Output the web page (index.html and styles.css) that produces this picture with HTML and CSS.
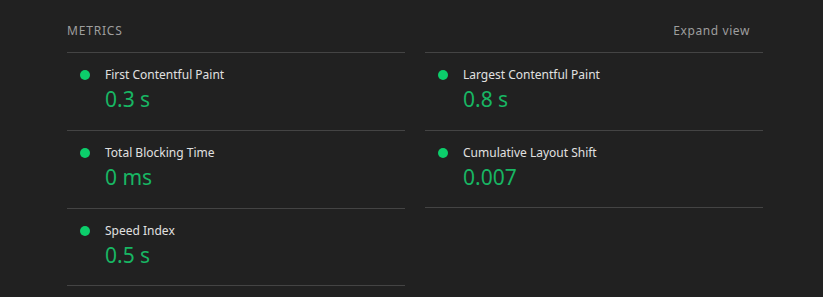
FILE: index.html
```html
<!DOCTYPE html>
<html lang="en">
    <head>
        <meta charset="UTF-8">
        <meta name="viewport" content="width=device-width, initial-scale=1.0">
        <title>Metrics</title>
        <link rel="stylesheet" href="styles.css">
    </head>
<body>
    <div class="metrics">
        <div class="metrics-header">
            <span class="metrics-title">METRICS</span>
            <span class="expand-link">Expand view</span>
        </div>
        <div class="metrics-grid">
            <div class="metric">
                <span class="dot"></span>
                <span class="metric-label">First Contentful Paint</span>
                <span class="metric-value">0.3 s</span>
            </div>
            <div class="metric">
                <span class="dot"></span>
                <span class="metric-label">Largest Contentful Paint</span>
                <span class="metric-value">0.8 s</span>
            </div>
            <div class="metric">
                <span class="dot"></span>
                <span class="metric-label">Total Blocking Time</span>
                <span class="metric-value">0 ms</span>
            </div>
            <div class="metric">
                <span class="dot"></span>
                <span class="metric-label">Cumulative Layout Shift</span>
                <span class="metric-value">0.007</span>
            </div>
            <div class="metric">
                <span class="dot"></span>
                <span class="metric-label">Speed Index</span>
                <span class="metric-value">0.5 s</span>
            </div>
        </div>
    </div>
</body>
</html>
```

FILE: styles.css
```css
body {
    margin: 0;
    background-color: #212121;
    font-family: 'Noto Sans', 'Open Sans', sans-serif;
}
.metrics {
    width: 696px;
    margin-left: 67px;
}
.metrics-header {
    display: flex;
    justify-content: space-between;
    align-items: center;
    height: 52px;
    padding-right: 13px;
    padding-top: 8px;
    box-sizing: border-box;
}
.metrics-title {
    color: #9e9e9e;
    font-size: 12px;
    letter-spacing: 0.8px;
}
.expand-link {
    color: #9e9e9e;
    font-size: 12px;
    letter-spacing: 0.6px;
}
.metrics-grid {
    display: grid;
    grid-template-columns: 1fr 1fr;
    column-gap: 20px;
}
.metric {
    display: grid;
    grid-template-columns: 38px 1fr;
    align-items: center;
    align-content: start;
    height: 78px;
    padding-top: 14px;
    box-sizing: border-box;
    border-top: 1px solid #444;
}
.metric:nth-last-child(-n+2) {
    border-bottom: 1px solid #444;
}
.dot {
    width: 10px;
    height: 10px;
    border-radius: 50%;
    background: #0cce6b;
    margin-left: 13px;
}
.metric-label {
    color: #e0e0e0;
    font-size: 12px;
    line-height: 16px;
}
.metric-value {
    grid-column: 2;
    color: #18b663;
    font-size: 21px;
    line-height: 28px;
    margin-top: 2px;
}
```
